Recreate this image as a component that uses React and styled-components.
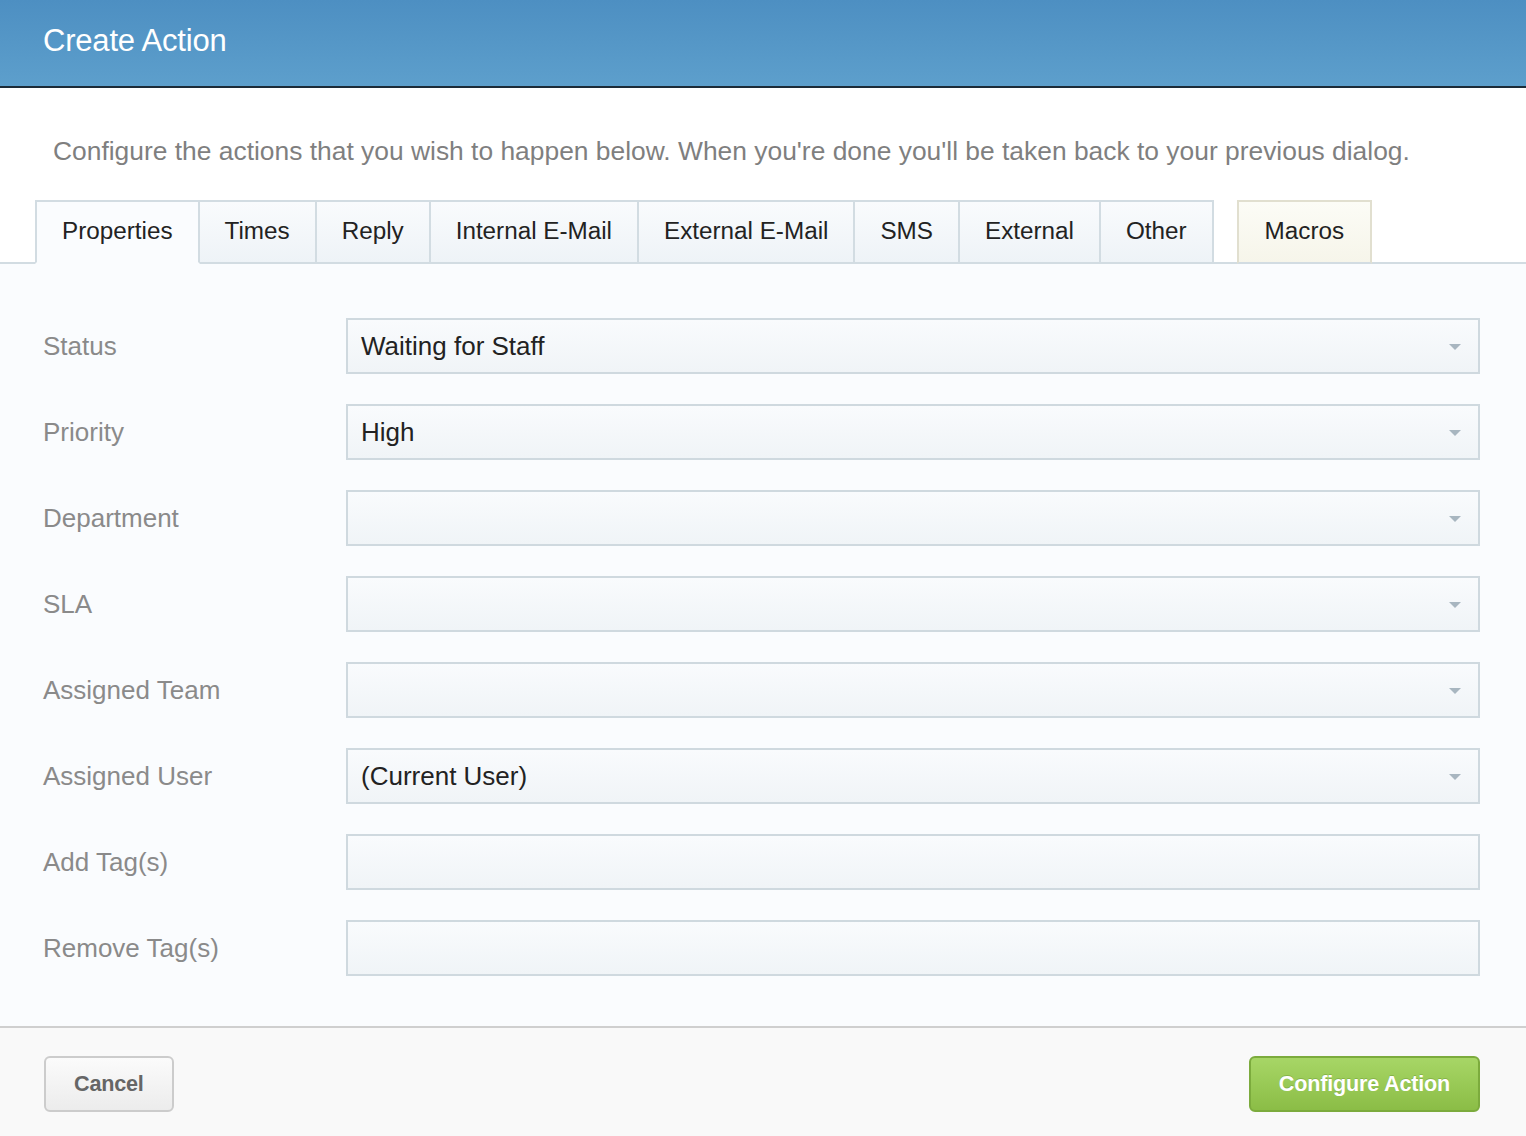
import React from "react";
import styled, { createGlobalStyle } from "styled-components";

const Global = createGlobalStyle`
  html, body { margin: 0; padding: 0; background: #ffffff; }
  body { font-family: "Liberation Sans", Arial, Helvetica, sans-serif; }
  * { box-sizing: border-box; }
`;

const Page = styled.div`
  width: 1526px;
  height: 1136px;
  display: flex;
  flex-direction: column;
  background: #ffffff;
  overflow: hidden;
`;

const Header = styled.header`
  height: 88px;
  flex: none;
  background: linear-gradient(to bottom, #4d8fc2, #5d9fcc);
  border-bottom: 2px solid #1c2b38;
  display: flex;
  align-items: center;
  padding: 0 0 4px 43px;
`;

const Title = styled.h1`
  margin: 0;
  font-size: 31px;
  font-weight: normal;
  color: #ffffff;
  letter-spacing: -0.2px;
`;

const Intro = styled.p`
  margin: 0;
  padding: 48px 0 34px 53px;
  font-size: 26.4px;
  line-height: 30px;
  color: #7f7f7f;
  white-space: nowrap;
`;

const TabBar = styled.nav`
  display: flex;
  align-items: flex-end;
  padding-left: 35px;
  border-bottom: 2px solid #d2dce2;
  height: 64px;
  flex: none;
`;

const Tab = styled.div`
  height: 64px;
  margin-bottom: -2px;
  padding: 0 ${(p) => p.$pad || 25}px 2px;
  display: flex;
  align-items: center;
  font-size: 24.25px;
  color: #222222;
  border: 2px solid ${(p) => (p.$macro ? "#e1dfcf" : "#d2dce2")};
  border-left-width: ${(p) => (p.$first || p.$macro ? 2 : 0)}px;
  border-bottom-color: ${(p) => (p.$active ? "#fafcfe" : "#d2dce2")};
  margin-left: ${(p) => (p.$macro ? 23 : 0)}px;
  background: ${(p) =>
    p.$active
      ? "#fafcfe"
      : p.$macro
      ? "linear-gradient(to bottom, #fcfcf6, #f6f5ea)"
      : "linear-gradient(to bottom, #f9fbfd, #eef3f7)"};
`;

const Panel = styled.section`
  flex: 1;
  background: #fafcfe;
  padding: 54px 46px 0 43px;
  display: flex;
  flex-direction: column;
  gap: 30px;
`;

const Row = styled.div`
  display: grid;
  grid-template-columns: 303px 1fr;
  align-items: center;
`;

const Label = styled.label`
  font-size: 26px;
  color: #8a8a8a;
`;

const Field = styled.div`
  position: relative;
  height: 56px;
  border: 2px solid #cfd9df;
  background: linear-gradient(to bottom, #f9fbfd, #f0f4f7);
  display: flex;
  align-items: center;
  padding: 0 40px 0 13px;
  font-size: 26px;
  color: #222222;
`;

const Arrow = styled.span`
  position: absolute;
  right: 17px;
  top: 24px;
  width: 0;
  height: 0;
  border-left: 6px solid transparent;
  border-right: 6px solid transparent;
  border-top: 6px solid #a8b6c0;
`;

const Footer = styled.footer`
  height: 110px;
  flex: none;
  background: #f9f9f9;
  border-top: 2px solid #cfcfcf;
  display: flex;
  justify-content: space-between;
  align-items: flex-start;
  padding: 28px 46px 0 44px;
`;

const Button = styled.button`
  height: 56px;
  padding: 0 28px;
  border-radius: 6px;
  font-family: "Liberation Sans", Arial, sans-serif;
  font-weight: bold;
  font-size: 21.6px;
  letter-spacing: -0.2px;
  cursor: pointer;
  border: 2px solid ${(p) => (p.$primary ? "#7cab3d" : "#cccccc")};
  color: ${(p) => (p.$primary ? "#ffffff" : "#666666")};
  background: ${(p) =>
    p.$primary
      ? "linear-gradient(to bottom, #a7d666, #8bbd46)"
      : "linear-gradient(to bottom, #fbfbfb, #ececec)"};
  text-shadow: ${(p) => (p.$primary ? "0 -1px 0 rgba(90,130,40,0.35)" : "none")};
`;

const tabs = [
  "Properties",
  "Times",
  "Reply",
  "Internal E-Mail",
  "External E-Mail",
  "SMS",
  "External",
  "Other",
];

const rows = [
  { label: "Status", value: "Waiting for Staff", select: true },
  { label: "Priority", value: "High", select: true },
  { label: "Department", value: "", select: true },
  { label: "SLA", value: "", select: true },
  { label: "Assigned Team", value: "", select: true },
  { label: "Assigned User", value: "(Current User)", select: true },
  { label: "Add Tag(s)", value: "", select: false },
  { label: "Remove Tag(s)", value: "", select: false },
];

export default function App() {
  return (
    <Page>
      <Global />
      <Header>
        <Title>Create Action</Title>
      </Header>
      <Intro>
        Configure the actions that you wish to happen below. When you're done you'll be taken back to your previous dialog.
      </Intro>
      <TabBar>
        {tabs.map((t, i) => (
          <Tab key={t} $first={i === 0} $active={i === 0}>
            {t}
          </Tab>
        ))}
        <Tab $macro $pad={26}>Macros</Tab>
      </TabBar>
      <Panel>
        {rows.map((r) => (
          <Row key={r.label}>
            <Label>{r.label}</Label>
            <Field>
              {r.value}
              {r.select && <Arrow />}
            </Field>
          </Row>
        ))}
      </Panel>
      <Footer>
        <Button>Cancel</Button>
        <Button $primary>Configure Action</Button>
      </Footer>
    </Page>
  );
}
